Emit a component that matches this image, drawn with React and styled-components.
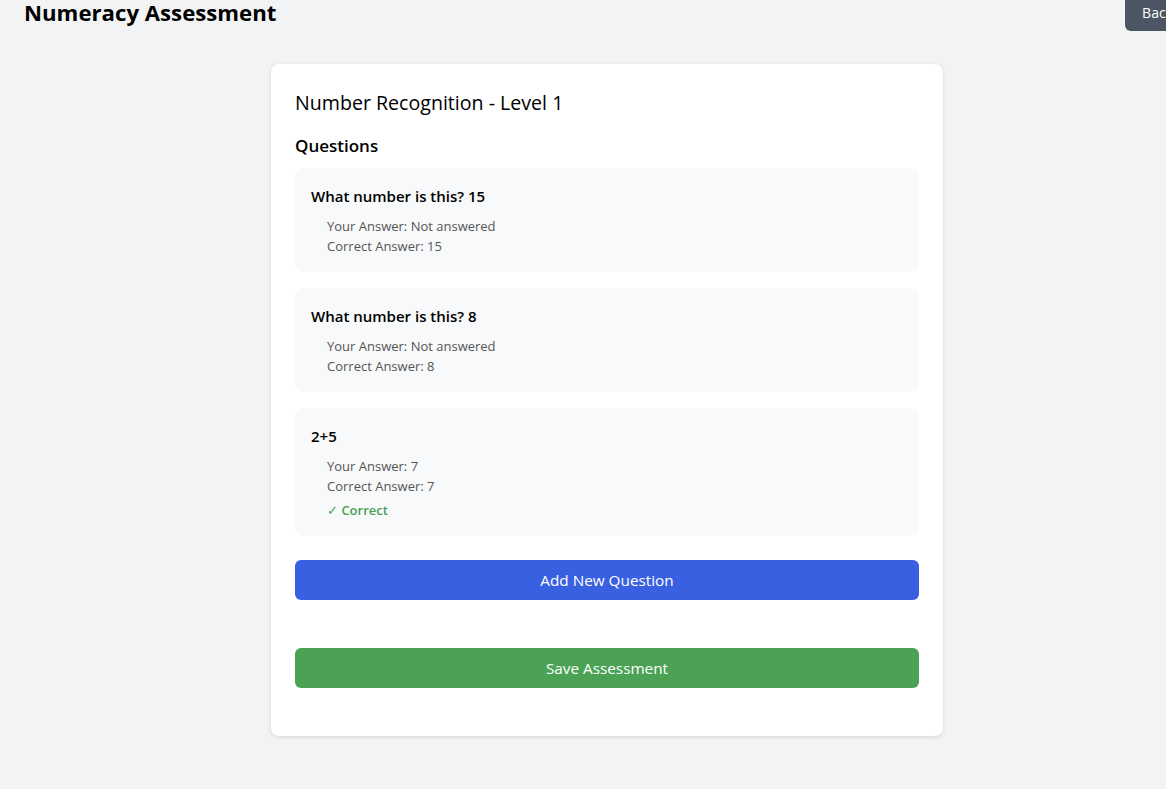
import React from "react";
import styled, { createGlobalStyle } from "styled-components";

const GlobalStyle = createGlobalStyle`
  html, body {
    margin: 0;
    padding: 0;
    background: #f2f3f5;
    overflow: hidden;
  }
  body {
    font-family: "Open Sans", "Noto Sans", sans-serif;
    color: #000;
  }
`;

const Page = styled.div`
  width: calc(100% + 48px);
  min-height: 789px;
  background: #f2f3f5;
`;

const Header = styled.header`
  display: flex;
  justify-content: space-between;
  align-items: flex-start;
  margin-top: -10px;
  padding: 0 24px;
`;

const Title = styled.h1`
  margin: 8px 0 0;
  font-size: 22.2px;
  font-weight: 700;
  line-height: 30px;
`;

const BackButton = styled.button`
  background: #4b5563;
  color: #fff;
  border: none;
  border-radius: 6px;
  padding: 13px 17px 9px;
  font-family: inherit;
  font-size: 14px;
  line-height: 19px;
`;

const Card = styled.main`
  width: 672px;
  box-sizing: border-box;
  margin: 33px auto 0;
  background: #fff;
  border-radius: 8px;
  box-shadow: 0 1px 4px rgba(0, 0, 0, 0.12);
  padding: 24px 24px 48px;
`;

const CardTitle = styled.h2`
  margin: 2px 0 0;
  font-size: 19.6px;
  font-weight: 500;
  line-height: 26px;
`;

const SectionTitle = styled.h3`
  margin: 18px 0 10px;
  font-size: 17px;
  font-weight: 600;
  line-height: 24px;
`;

const QuestionList = styled.div`
  display: flex;
  flex-direction: column;
  gap: 16px;
`;

const QuestionCard = styled.div`
  background: #f8f9fa;
  border-radius: 8px;
  padding: 18px 16px 16px;
`;

const QuestionText = styled.div`
  font-size: 15px;
  font-weight: 600;
  line-height: 20px;
  margin-bottom: 10px;
`;

const AnswerLine = styled.div`
  padding-left: 16px;
  font-size: 13px;
  line-height: 20px;
  color: #555;
`;

const Status = styled.div`
  padding-left: 16px;
  margin-top: 4px;
  font-size: 13px;
  font-weight: 600;
  line-height: 20px;
  color: #4a9f52;
`;

const CheckMark = styled.span`
  font-weight: 400;
`;

const ActionButton = styled.button`
  display: block;
  width: 100%;
  height: 40px;
  margin-top: ${(p) => p.$top}px;
  border: none;
  border-radius: 6px;
  background: ${(p) => p.$color};
  color: #fff;
  font-family: inherit;
  font-size: 15.3px;
`;

const questions = [
  { text: "What number is this? 15", answer: "Not answered", correct: "15" },
  { text: "What number is this? 8", answer: "Not answered", correct: "8" },
  { text: "2+5", answer: "7", correct: "7", ok: true },
];

const App = () => (
  <Page>
    <GlobalStyle />
    <Header>
      <Title>Numeracy Assessment</Title>
      <BackButton>Back</BackButton>
    </Header>
    <Card>
      <CardTitle>Number Recognition - Level 1</CardTitle>
      <SectionTitle>Questions</SectionTitle>
      <QuestionList>
        {questions.map((q) => (
          <QuestionCard key={q.text}>
            <QuestionText>{q.text}</QuestionText>
            <AnswerLine>Your Answer: {q.answer}</AnswerLine>
            <AnswerLine>Correct Answer: {q.correct}</AnswerLine>
            {q.ok && (
              <Status>
                <CheckMark>✓</CheckMark> Correct
              </Status>
            )}
          </QuestionCard>
        ))}
      </QuestionList>
      <ActionButton $color="#3a60e2" $top={24}>
        Add New Question
      </ActionButton>
      <ActionButton $color="#4ba255" $top={48}>
        Save Assessment
      </ActionButton>
    </Card>
  </Page>
);

export default App;
